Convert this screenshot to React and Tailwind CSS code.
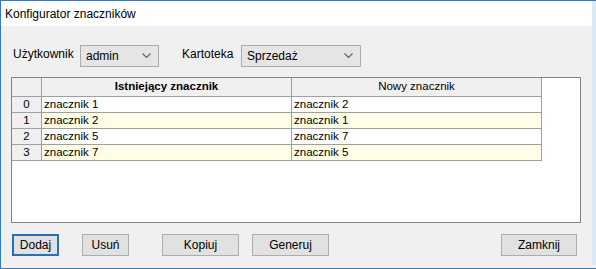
import React from 'react';

const rows = [
  { id: 0, from: 'znacznik 1', to: 'znacznik 2' },
  { id: 1, from: 'znacznik 2', to: 'znacznik 1' },
  { id: 2, from: 'znacznik 5', to: 'znacznik 7' },
  { id: 3, from: 'znacznik 7', to: 'znacznik 5' },
];

const Chevron = () => (
  <svg width="9" height="6" viewBox="0 0 9 6" className="shrink-0">
    <path d="M0.5 0.5 L4.5 4.5 L8.5 0.5" fill="none" stroke="#606060" strokeWidth="1.1" />
  </svg>
);

const Combo = ({ value, className }) => (
  <div className={`flex items-center justify-between h-[22px] bg-[#e5e5e5] border border-[#acacac] pl-[5px] pr-[7px] ${className}`}>
    <span>{value}</span>
    <Chevron />
  </div>
);

const Btn = ({ children, className = '', focused }) => (
  <button
    className={`h-[22px] bg-[#e1e1e1] flex items-center justify-center ${focused ? 'border-2 border-[#2a6fb0]' : 'border border-[#adadad]'} ${className}`}
  >
    {children}
  </button>
);

export default function App() {
  return (
    <div
      className="w-[596px] h-[269px] flex flex-col bg-[#f0f0f0] border-l border-t border-[#2f7dbf] text-[12px] text-black overflow-hidden"
      style={{ fontFamily: '"Liberation Sans", Arial, sans-serif' }}
    >
      <div className="h-[25px] bg-white flex items-center pl-[4px] pr-[4px] border-r-[4px] border-[#dbe9f6]">
        <span className="text-[12px]">Konfigurator znaczników</span>
      </div>

      <div className="flex-1 flex flex-col pl-[10px] pr-[14px] border-r-[4px] border-[#dbe9f6]">
        <div className="flex items-center mt-[19px] h-[22px]">
          <span className="ml-[2px] w-[67px] -mt-[4px]">Użytkownik</span>
          <Combo value="admin" className="w-[79px]" />
          <span className="ml-[23px] w-[59px] -mt-[4px]">Kartoteka</span>
          <Combo value="Sprzedaż" className="w-[120px]" />
        </div>

        <div className="mt-[10px] h-[146px] w-[570px] bg-white border border-[#828282] text-[11.5px]">
          <div className="flex h-[19px]">
            <div className="w-[30px] bg-[#f0f0f0] border-r border-b border-[#a0a0a0]" />
            <div className="w-[250px] bg-[#f0f0f0] border-r border-b border-[#a0a0a0] flex items-center justify-center font-bold">
              Istniejący znacznik
            </div>
            <div className="w-[250px] bg-[#f0f0f0] border-r border-b border-[#a0a0a0] flex items-center justify-center">
              Nowy znacznik
            </div>
          </div>
          {rows.map((r, i) => (
            <div key={r.id} className="flex h-[16px]">
              <div className="w-[30px] bg-[#f0f0f0] border-r border-b border-[#a0a0a0] flex items-center justify-center">
                {r.id}
              </div>
              <div className={`w-[250px] border-r border-b border-[#a0a0a0] flex items-center pl-[2px] ${i % 2 ? 'bg-[#fefee6]' : 'bg-white'}`}>
                {r.from}
              </div>
              <div className={`w-[250px] border-r border-b border-[#a0a0a0] flex items-center pl-[2px] ${i % 2 ? 'bg-[#fefee6]' : 'bg-white'}`}>
                {r.to}
              </div>
            </div>
          ))}
        </div>

        <div className="flex mt-[11px]">
          <Btn focused className="w-[47px] ml-[1px]">Dodaj</Btn>
          <Btn className="w-[47px] ml-[23px]">Usuń</Btn>
          <Btn className="w-[77px] ml-[33px]">Kopiuj</Btn>
          <Btn className="w-[77px] ml-[13px]">Generuj</Btn>
          <Btn className="w-[76px] ml-auto mr-[1px]">Zamknij</Btn>
        </div>
      </div>
      <div className="h-[4px] bg-[#fbeee8] border-b border-[#2f7dbf]" />
    </div>
  );
}
